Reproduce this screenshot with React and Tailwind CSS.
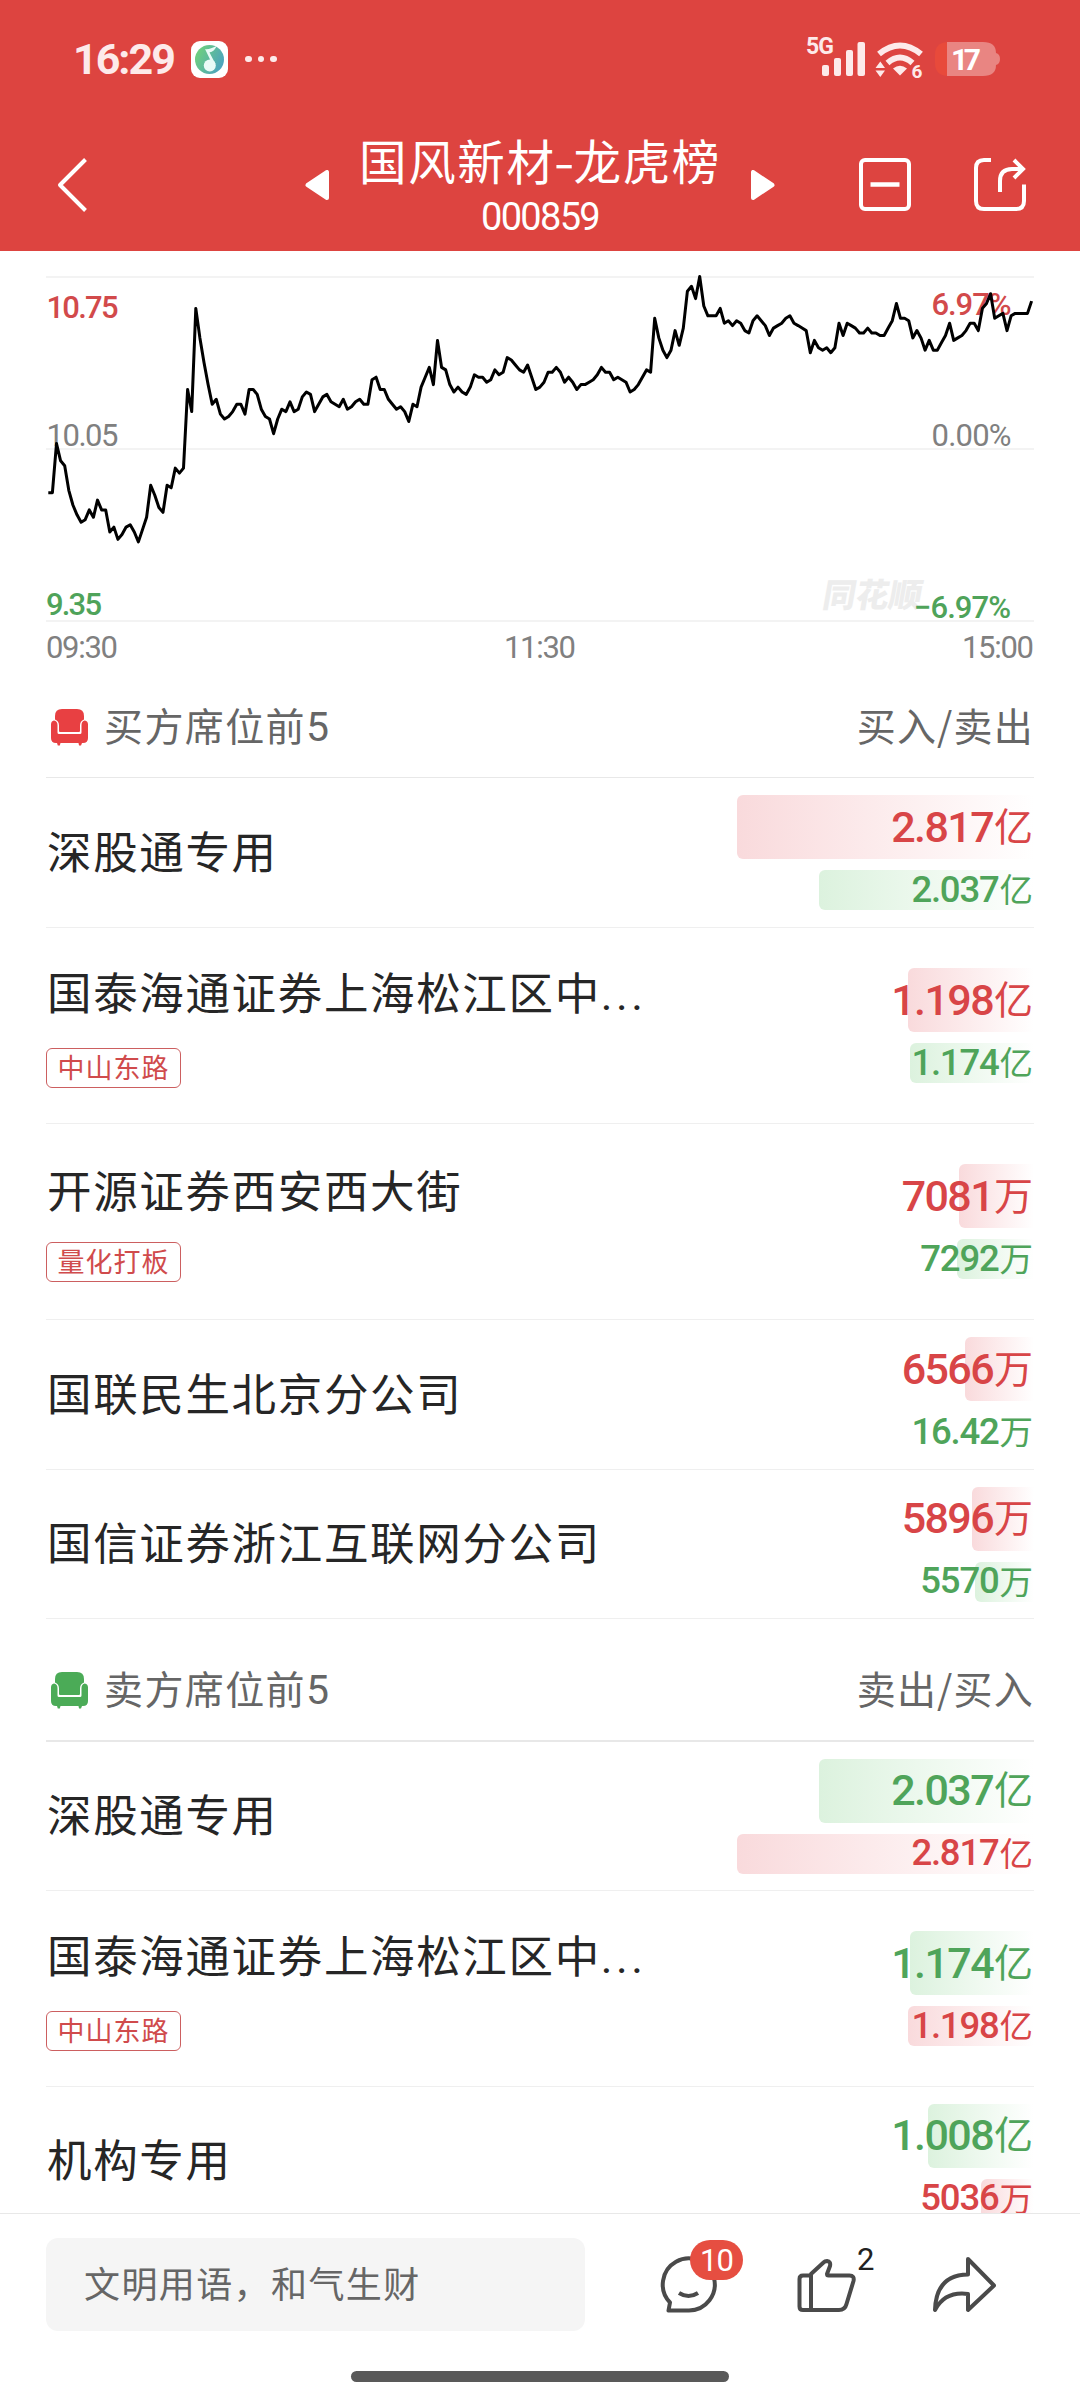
import React from 'react';

const CHART_TOP = 25.5;
const CHART_STEP = 4.097;
const CENT_HEIGHT = 2.457;

// One price per minute, in cents
const prices = [
  987, 987, 1007, 1000, 998, 988, 982, 978, 975, 976, 980, 977, 984, 980, 980, 971, 973, 968, 970, 973,
  974, 971, 967, 972, 977, 990, 986, 981, 979, 990, 989, 997, 995, 997, 1029, 1020, 1062, 1050, 1040, 1031,
  1023, 1025, 1019, 1017, 1018, 1020, 1023, 1023, 1019, 1029, 1029, 1027, 1021, 1018, 1017, 1011, 1017, 1021, 1020, 1024,
  1020, 1021, 1026, 1028, 1027, 1020, 1023, 1026, 1027, 1024, 1023, 1022, 1025, 1021, 1022, 1024, 1025, 1023, 1023, 1033,
  1034, 1029, 1029, 1025, 1023, 1021, 1022, 1020, 1016, 1023, 1022, 1030, 1034, 1038, 1031, 1049, 1038, 1037, 1031, 1028,
  1030, 1028, 1027, 1030, 1035, 1034, 1034, 1032, 1033, 1037, 1035, 1036, 1042, 1041, 1039, 1037, 1036, 1039, 1034, 1029,
  1030, 1032, 1036, 1036, 1038, 1036, 1032, 1034, 1032, 1029, 1031, 1031, 1032, 1033, 1035, 1038, 1036, 1036, 1033, 1034,
  1033, 1032, 1028, 1029, 1031, 1034, 1037, 1036, 1058, 1050, 1045, 1042, 1045, 1053, 1047, 1054, 1069, 1071, 1066, 1075,
  1063, 1059, 1059, 1059, 1062, 1056, 1057, 1055, 1057, 1056, 1053, 1052, 1057, 1059, 1057, 1055, 1051, 1054, 1055, 1056,
  1058, 1059, 1056, 1055, 1054, 1053, 1044, 1049, 1046, 1045, 1046, 1044, 1046, 1056, 1051, 1056, 1055, 1054, 1052, 1052,
  1054, 1052, 1052, 1051, 1051, 1054, 1057, 1064, 1058, 1058, 1057, 1050, 1053, 1050, 1045, 1049, 1045, 1045, 1048, 1051,
  1056, 1049, 1050, 1051, 1053, 1056, 1056, 1053, 1062, 1064, 1068, 1058, 1059, 1060, 1053, 1059, 1060, 1060, 1060, 1060,
  1065,
];

const buyers = [
  { name: '深股通专用', main: ['2.817', '亿', 297], sub: ['2.037', '亿', 215] },
  { name: '国泰海通证券上海松江区中', more: true, tag: '中山东路', main: ['1.198', '亿', 126], sub: ['1.174', '亿', 124] },
  { name: '开源证券西安西大街', tag: '量化打板', main: ['7081', '万', 75], sub: ['7292', '万', 77] },
  { name: '国联民生北京分公司', main: ['6566', '万', 69], sub: ['16.42', '万', 0] },
  { name: '国信证券浙江互联网分公司', main: ['5896', '万', 62], sub: ['5570', '万', 59] },
];

const sellers = [
  { name: '深股通专用', main: ['2.037', '亿', 215], sub: ['2.817', '亿', 297] },
  { name: '国泰海通证券上海松江区中', more: true, tag: '中山东路', main: ['1.174', '亿', 124], sub: ['1.198', '亿', 126] },
  { name: '机构专用', main: ['1.008', '亿', 106], sub: ['5036', '万', 53] },
];

const StatusBar = () => (
  <div className="flex h-[118px] items-center justify-between pl-[73px] pr-[76px]">
    <div className="flex items-center">
      <span className="w-[118px] font-['Roboto'] text-[43px] font-bold leading-none tracking-[-2px] text-[#fdeaea]">
        16:29
      </span>
      <svg width="37" height="37" viewBox="0 0 37 37">
        <defs>
          <linearGradient id="music" x1="0" y1="0.3" x2="1" y2="0.8">
            <stop offset="0" stopColor="#6fd07c" />
            <stop offset="1" stopColor="#4a9fc4" />
          </linearGradient>
        </defs>
        <rect width="37" height="37" rx="9" fill="#fff" />
        <circle cx="18.5" cy="18.5" r="14.5" fill="url(#music)" />
        <circle cx="18.8" cy="24.5" r="6" fill="#eafaf6" />
        <path d="M14 8c3 .8 7-1 11.500-3-1.500 4-3.500 5.500-7 6.500L24.500 23l-3.500-.5L14 8z" fill="#eafaf6" />
      </svg>
      <div className="ml-[17px] flex gap-[6px]">
        <span className="size-[6.5px] rounded-full bg-[#fdeaea]" />
        <span className="size-[6.5px] rounded-full bg-[#fdeaea]" />
        <span className="size-[6.5px] rounded-full bg-[#fdeaea]" />
      </div>
    </div>

    <svg width="198" height="60" viewBox="806 29 198 60" fill="#fdeaea" fontFamily="Roboto, sans-serif" fontWeight="700">
      <text x="806" y="54" fontSize="23" textLength="28">5G</text>
      <rect x="822" y="65" width="7" height="11" rx="2" />
      <rect x="834" y="58" width="7" height="18" rx="2" />
      <rect x="846" y="50" width="7" height="26" rx="2" />
      <rect x="857.5" y="42" width="7.500" height="34" rx="2" />
      <path d="M879 54Q900 37 921 54M887.500 63Q900 52 912.500 63" fill="none" stroke="#fdeaea" strokeWidth="6" />
      <path d="M893 68.500Q900 63 907 68.500L900 75.500z" />
      <path d="M875.500 68h9.500l-4.700-6.500zM875.500 70.500h9.500l-4.700 6.500z" />
      <text x="911.5" y="78" fontSize="19">6</text>
      <path d="M947 42h36q13 0 13 11 4 1 4 6t-4 6q0 11-13 11h-36z" fill="#e98582" />
      <path d="M947 42q-12 1-12 13v8q0 12 12 13z" fill="#e84a3b" />
      <text x="951" y="69.5" fontSize="30" fill="#fff" textLength="30">17</text>
    </svg>
  </div>
);

const NavBar = () => (
  <div className="flex h-[133px] items-center">
    <svg className="ml-[54px] mr-[215px]" width="36" height="56" viewBox="0 0 36 56" fill="none" stroke="#fff" strokeWidth="4">
      <path d="M31.500 2.500 6 28l25.500 25.500" strokeLinejoin="round" />
    </svg>
    <svg width="24" height="30" viewBox="0 0 24 30" fill="#fff" stroke="#fff" strokeWidth="4" strokeLinejoin="round">
      <path d="M22 2v26L2.500 15z" />
    </svg>
    <div className="flex w-[422px] flex-col items-center text-white">
      <h1 className="mt-[-5px] flex items-center whitespace-nowrap text-[47.5px] leading-[64px] tracking-[1.6px]">
        国风新材<span className="inline-block origin-center scale-x-125">-</span>龙虎榜
      </h1>
      <span className="mt-[5px] font-['Roboto'] text-[38px] leading-[40px] tracking-[-1.7px]">000859</span>
    </div>
    <svg width="24" height="30" viewBox="0 0 24 30" fill="#fff" stroke="#fff" strokeWidth="4" strokeLinejoin="round">
      <path d="M2 2v26l19.500-13z" />
    </svg>
    <svg className="ml-[83px]" width="54" height="54" viewBox="0 0 54 54" fill="none" stroke="#fff" strokeWidth="4">
      <rect x="3" y="2" width="48" height="49" rx="4" />
      <path d="M12.500 26.500h29" strokeWidth="4.5" />
    </svg>
    <svg className="ml-[61px]" width="54" height="54" viewBox="0 0 54 54" fill="none" stroke="#fff" strokeWidth="4">
      <path d="M18 2h-7Q3 2 3 10v33Q3 51 11 51h32q8 0 8-8V26.500" />
      <path d="M27 34V23q0-12 12-12h11M41 2l9 9-9 9" />
    </svg>
  </div>
);

const PriceChart = () => {
  const points = prices
    .map((p, i) => `${(48.3 + i * CHART_STEP).toFixed(1)},${(CHART_TOP + (1075 - p) * CENT_HEIGHT).toFixed(1)}`)
    .join(' ');

  return (
    <svg
      className="block"
      width="1080"
      height="425"
      viewBox="0 0 1080 425"
      fontFamily="Roboto, 'Noto Sans CJK SC', sans-serif"
      fontSize="31"
      fill="#808080"
    >
      <path d="M46 26h988M46 198h988M46 370h988" stroke="#f3f3f3" strokeWidth="2" />
      <text x="822" y="356" fontSize="33" fontWeight="900" fontFamily="'Noto Sans CJK SC', sans-serif" fill="#ededed" transform="translate(62 0) skewX(-10)" textLength="99">
        同花顺
      </text>
      <text x="46.5" y="67" fill="#d24a4b" fontWeight="500" textLength="72">10.75</text>
      <text x="46.5" y="194.5" textLength="72">10.05</text>
      <text x="46" y="364" fill="#4fa35a" fontWeight="500" textLength="56">9.35</text>
      <text x="931.5" y="64" fill="#d24a4b" fontWeight="500" textLength="80">6.97%</text>
      <text x="931.5" y="194.5" textLength="80">0.00%</text>
      <text x="914" y="367" fill="#4fa35a" fontWeight="500" textLength="97">−6.97%</text>
      <text x="46" y="407" textLength="72">09:30</text>
      <text x="504" y="407" textLength="72">11:30</text>
      <text x="962" y="407" textLength="72">15:00</text>
      <polyline points={points} fill="none" stroke="#000" strokeWidth="3" strokeLinejoin="round" />
    </svg>
  );
};

const SeatIcon = ({ color }) => (
  <svg width="38" height="38" viewBox="0 0 38 38" fill={color}>
    <path d="M5 8q0-7 7-7h15q7 0 7 7v3.500q-4 1.500-4 6V23q0 1-1 1H10q-1 0-1-1v-5.500q0-4.500-4-6z" />
    <path d="M4 12.500q3.500.5 3.500 4.500v7.500q0 1.500 1.500 1.500h21q1.500 0 1.500-1.500V17q0-4 3.300-4.500 3.200.5 3.200 4V30q0 5-5 5h-1l-1 2.500h-2L28.500 35h-18l-.7 2.500h-2L7 35H6q-5 0-5-5V16.500q0-3.500 3-4z" />
  </svg>
);

const SectionHeader = ({ title, columns, color }) => (
  <div className="flex h-[101px] items-center justify-between text-[39px] leading-none text-[#666]">
    <div className="flex items-center pl-1">
      <SeatIcon color={color} />
      <span className="ml-4 tracking-[1.4px]">
        {title}
        <span className="font-['Roboto'] text-[41px]">5</span>
      </span>
    </div>
    <span className="mt-[-4px] tracking-[1.2px]">{columns}</span>
  </div>
);

const Amount = ({ amount, red, large }) => {
  const [value, unit, width] = amount;
  return (
    <div
      className={`relative flex items-center justify-end pr-[1px] ${large ? 'h-16' : 'h-10'} ${
        red ? 'text-[#d84547]' : 'text-[#4fa45a]'
      }`}
    >
      <div
        className={`absolute inset-y-0 right-0 rounded-l-md bg-linear-to-r ${
          red ? 'from-[#f9dadc] to-white' : 'from-[#dcf2de] to-white'
        }`}
        style={{ width }}
      />
      <span
        className={`relative font-['Roboto'] font-medium leading-none ${
          large ? 'text-[43px] tracking-[-1.6px]' : 'text-[36.5px] tracking-[-1.2px]'
        }`}
      >
        {value}
      </span>
      <span
        className={`relative leading-none ${
          large ? 'ml-[1px] mt-[-6px] text-[39px]' : 'ml-[1px] mt-[-4px] text-[33.5px]'
        }`}
      >
        {unit}
      </span>
    </div>
  );
};

const SeatRow = ({ seat, buying, className }) => (
  <div className={`flex items-center justify-between border-b border-[#efefef] ${className}`}>
    <div className="mt-[-6px] flex flex-col items-start">
      <span className="whitespace-nowrap pl-[1px] text-[44.5px] leading-[60px] tracking-[1.65px] text-[#262626]">
        {seat.name}
        {seat.more && <span className="font-['Roboto'] tracking-[3.5px]">...</span>}
      </span>
      {seat.tag && (
        <span className="mb-[-3px] mt-[23px] flex h-10 w-[135px] items-center justify-center rounded-md border border-[#cc5f60] pb-[3px] text-[27px] leading-none tracking-[1px] text-[#d04b4c]">
          {seat.tag}
        </span>
      )}
    </div>
    <div className="flex w-[300px] flex-col gap-[11px]">
      <Amount amount={seat.main} red={buying} large />
      <Amount amount={seat.sub} red={!buying} />
    </div>
  </div>
);

const Footer = () => (
  <footer className="h-[187px] border-t border-[#e8e8e8] bg-white">
    <div className="flex pl-[46px] pt-6">
      <div className="flex h-[93px] w-[539px] items-center rounded-xl bg-[#f5f5f5] pb-[6px] pl-[38px] text-[36px] leading-none tracking-[1.4px] text-[#666]">
        文明用语，和气生财
      </div>
      <div className="relative ml-[75px] mt-[17px]">
        <svg width="58" height="60" viewBox="0 0 58 60" fill="none" stroke="#4a4a4a" strokeWidth="4">
          <path d="M8.500 55.500H29A26 26 0 1 0 10 47.500z" strokeLinejoin="round" />
          <path d="M19 38q9.500 6 19 0" />
        </svg>
        <span className="absolute left-[30px] top-[-15px] flex h-10 w-[53px] items-center justify-center rounded-full bg-[#e64e41] font-['Roboto'] text-[31px] leading-none tracking-[-1px] text-white">
          10
        </span>
      </div>
      <div className="relative ml-[78px] mt-[19px]">
        <svg width="62" height="56" viewBox="0 0 62 56" fill="none" stroke="#4a4a4a" strokeWidth="4" strokeLinejoin="round">
          <path d="M15 18.500h-8q-3.500 0-3.500 3.500v27.500q0 3.500 3.500 3.500h36q6 0 7.500-6l7-23q1.200-5.500-4-5.500H32.500q-1.500 0-1.500-1.500L34 9q1-4.500-3-5-2 0-3.500 1.500L15 17v36" />
        </svg>
        <span className="absolute left-[61px] top-[-13px] font-['Roboto'] text-[31px] leading-none text-[#222]">2</span>
      </div>
      <svg className="ml-[72px] mt-[18px]" width="66" height="58" viewBox="0 0 66 58" fill="none" stroke="#4a4a4a" strokeWidth="4" strokeLinejoin="round">
        <path d="M38 3 64 29.500 38 54V38Q15 35 5 54 6 19 38 18.500z" />
      </svg>
    </div>
    <div className="mx-auto mt-10 h-[11px] w-[378px] rounded-full bg-[#595959]" />
  </footer>
);

export default function App() {
  return (
    <div className="flex h-[2400px] w-[1080px] flex-col overflow-hidden bg-white font-['Noto_Sans_CJK_SC',sans-serif]">
      <header className="h-[251px] shrink-0 bg-[#dd4440]">
        <StatusBar />
        <NavBar />
      </header>

      <main className="h-[1962px] shrink-0 overflow-hidden">
        <PriceChart />
        <section className="px-[46px]">
          <SectionHeader title="买方席位前" columns="买入/卖出" color="#e84042" />
          <div className="border-t border-[#e8e8e8]">
            {buyers.map((seat, i) => (
              <SeatRow key={seat.name} seat={seat} buying className={seat.tag ? 'h-[196px]' : i === 4 ? 'h-[149px]' : 'h-[150px]'} />
            ))}
          </div>
        </section>
        <section className="px-[46px] pt-5">
          <SectionHeader title="卖方席位前" columns="卖出/买入" color="#4bab57" />
          <div className="border-t-2 border-[#e8e8e8]">
            {sellers.map((seat) => (
              <SeatRow key={seat.name} seat={seat} className={seat.tag ? 'h-[196px]' : 'h-[149px]'} />
            ))}
          </div>
        </section>
      </main>

      <Footer />
    </div>
  );
}
